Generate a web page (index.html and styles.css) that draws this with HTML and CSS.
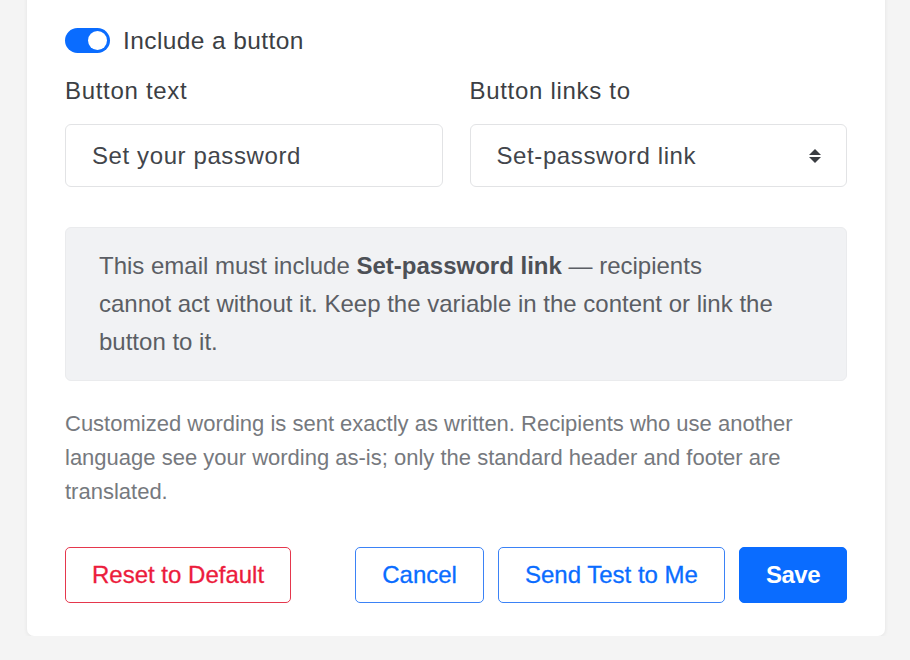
FILE: index.html
```html
<!DOCTYPE html>
<html lang="en">
<head>
<meta charset="utf-8">
<title>Email button settings</title>
<link rel="stylesheet" href="styles.css">
</head>
<body>
<div class="card">
  <div class="toggle-row">
    <span class="toggle"><span class="knob"></span></span>
    <span class="toggle-label">Include a button</span>
  </div>
  <div class="fields">
    <div class="field">
      <div class="label">Button text</div>
      <div class="input">Set your password</div>
    </div>
    <div class="field">
      <div class="label">Button links to</div>
      <div class="input select">
        <span>Set-password link</span>
        <svg class="arrows" width="14" height="16" viewBox="0 0 14 16"><path d="M7 1 L13 7 L1 7 Z" fill="#3a3d42"/><path d="M1 9 L13 9 L7 15 Z" fill="#3a3d42"/></svg>
      </div>
    </div>
  </div>
  <div class="info">This email must include <b>Set-password link</b> — recipients cannot act without it. Keep the variable in the content or link the button to it.</div>
  <p class="hint">Customized wording is sent exactly as written. Recipients who use another language see your wording as-is; only the standard header and footer are translated.</p>
  <div class="actions">
    <button class="btn btn-danger">Reset to Default</button>
    <div class="right">
      <button class="btn btn-outline">Cancel</button>
      <button class="btn btn-outline">Send Test to Me</button>
      <button class="btn btn-primary">Save</button>
    </div>
  </div>
</div>
</body>
</html>
```

FILE: styles.css
```css
html, body {
  margin: 0;
  padding: 0;
  background: #f4f4f4;
  font-family: "Liberation Sans", Arial, sans-serif;
}
.card {
  margin: -20px 25px 0 27px;
  padding: 48px 38px 33px;
  background: #ffffff;
  border-radius: 0 0 7px 7px;
  box-shadow: 0 1px 4px rgba(0, 0, 0, 0.07);
}
.toggle-row {
  display: flex;
  align-items: center;
  gap: 13px;
  height: 25px;
}
.toggle {
  display: flex;
  justify-content: flex-end;
  align-items: center;
  width: 45px;
  height: 25px;
  box-sizing: border-box;
  padding: 0 3px;
  border-radius: 13px;
  background: #0a6cff;
}
.knob {
  width: 19px;
  height: 19px;
  border-radius: 50%;
  background: #fff;
}
.toggle-label {
  font-size: 24.5px;
  letter-spacing: 0.4px;
  color: #3c3f44;
}
.fields {
  display: grid;
  grid-template-columns: 1fr 1fr;
  gap: 27px;
  margin-top: 24px;
}
.label {
  font-size: 24px;
  line-height: 28px;
  letter-spacing: 0.7px;
  color: #3c3f44;
  margin-bottom: 19px;
}
.input {
  display: flex;
  align-items: center;
  justify-content: space-between;
  height: 63px;
  box-sizing: border-box;
  padding: 0 24px 0 26px;
  border: 1px solid #e2e3e5;
  border-radius: 6px;
  font-size: 24px;
  letter-spacing: 0.6px;
  color: #42454b;
}
.arrows {
  display: block;
}
.info {
  margin-top: 40px;
  padding: 19px 72px 19px 33px;
  background: #f1f2f4;
  border: 1px solid #eaebed;
  border-radius: 6px;
  font-size: 24px;
  line-height: 38px;
  color: #5b5e64;
}
.info b {
  color: #4d5056;
}
.hint {
  margin: 26px 0 0;
  font-size: 22px;
  line-height: 34px;
  color: #76797e;
}
.actions {
  display: flex;
  justify-content: space-between;
  margin-top: 38px;
}
.right {
  display: flex;
  gap: 14px;
}
.btn {
  height: 56px;
  padding: 0 26px;
  border-radius: 5px;
  font-family: "Liberation Sans", Arial, sans-serif;
  font-size: 24px;
  font-weight: 400;
  letter-spacing: 0;
  -webkit-text-stroke: 0.3px currentColor;
  background: #fff;
  cursor: pointer;
}
.btn-danger {
  border: 1px solid #e5374d;
  color: #ec1c3c;
}
.btn-outline {
  border: 1px solid #3b82f6;
  color: #0a6cff;
}
.btn-primary {
  border: 1px solid #0a6cff;
  background: #0a6cff;
  color: #fff;
  font-weight: 700;
  letter-spacing: -0.5px;
  -webkit-text-stroke: 0;
}
```
